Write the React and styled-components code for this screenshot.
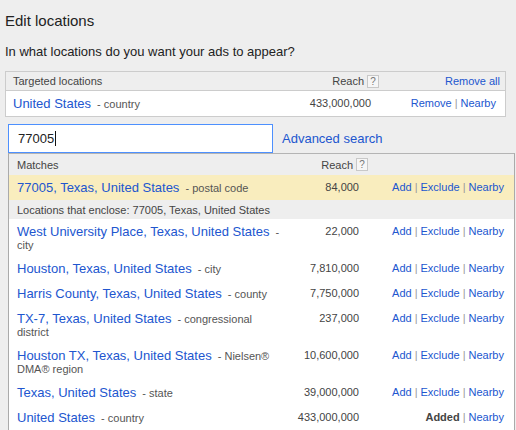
import React from "react";
import styled, { createGlobalStyle } from "styled-components";

const GlobalStyle = createGlobalStyle`
  html, body { margin: 0; padding: 0; }
  body {
    background: #eeeeee;
    font-family: "Liberation Sans", Arial, sans-serif;
    color: #222;
  }
`;

const Page = styled.div`
  padding: 12px 5px 0;
  overflow: hidden;
  height: 418px;
`;

const Title = styled.h1`
  margin: 0;
  font-size: 15px;
  line-height: 18px;
  font-weight: normal;
  color: #222;
`;

const Question = styled.p`
  margin: 14px 0 0;
  font-size: 13px;
  line-height: 16px;
  color: #222;
`;

const TargetBox = styled.div`
  margin-top: 11px;
  border: 1px solid #ccc;
  background: #fff;
  width: 499px;
`;

const TargetHeader = styled.div`
  display: grid;
  grid-template-columns: 1fr 100px 121px;
  align-items: center;
  height: 18px;
  padding: 0 5px 0 7px;
  background: #eeeeee;
  border-bottom: 1px solid #ccc;
  font-size: 11px;
  color: #444;
`;

const TargetRow = styled.div`
  display: grid;
  grid-template-columns: 1fr 100px 125px;
  align-items: center;
  height: 25px;
  padding: 0 9px 0 7px;
`;

const RightCell = styled.div`
  text-align: right;
  display: flex;
  justify-content: flex-end;
  align-items: center;
`;

const HelpBox = styled.span`
  display: inline-flex;
  align-items: center;
  justify-content: center;
  width: 10px;
  height: 11px;
  margin-left: 3px;
  border: 1px solid #c8c8c8;
  background: #f6f6f6;
  color: #777;
  font-size: 10px;
  line-height: 11px;
`;

const Link = styled.a`
  color: #2156cf;
  text-decoration: none;
  cursor: pointer;
  font-size: ${(p) => (p.$big ? "13px" : "11px")};
  line-height: ${(p) => (p.$big ? "15px" : "inherit")};
`;

const Desc = styled.span`
  font-size: 11px;
  color: #555;
  margin-left: 3px;
`;

const Number = styled.div`
  text-align: right;
  font-size: 11px;
  line-height: 15px;
  color: #444;
`;

const Actions = styled.div`
  text-align: right;
  font-size: 11px;
  line-height: 15px;
  color: #999;
  white-space: nowrap;
`;

const Sep = styled.span`
  color: #999;
  margin: 0 3px;
`;

const Added = styled.b`
  color: #444;
`;

const SearchRow = styled.div`
  display: flex;
  align-items: center;
  gap: 9px;
  margin: 7px 0 0 3px;
`;

const SearchInput = styled.div`
  box-sizing: border-box;
  width: 265px;
  height: 29px;
  border: 1px solid #4d90fe;
  background: #fff;
  padding: 0 9px;
  display: flex;
  align-items: center;
  font-size: 13px;
  color: #222;
`;

const Caret = styled.span`
  display: inline-block;
  width: 1px;
  height: 15px;
  background: #111;
  margin-left: 1px;
`;

const Dropdown = styled.div`
  margin-left: 3px;
  width: 505px;
  border: 1px solid #aaa;
  border-top-color: #b4b4b4;
  background: #fff;
`;

const DropHeader = styled.div`
  display: grid;
  grid-template-columns: 265px 86px 1fr;
  align-items: center;
  height: 21px;
  padding: 0 10px 0 8px;
  background: #eeeeee;
  font-size: 11px;
  color: #444;
`;

const MatchRow = styled.div`
  display: grid;
  grid-template-columns: 265px 77px 1fr;
  align-items: start;
  padding: 5px 10px 5px 8px;
  background: ${(p) => (p.$highlight ? "#f9edbe" : "#fff")};
`;

const NameCell = styled.div`
  font-size: 11px;
  line-height: 12px;
`;

const EncloseRow = styled.div`
  display: flex;
  align-items: center;
  height: 19px;
  padding: 0 8px;
  background: #eeeeee;
  font-size: 11px;
  color: #444;
`;

const matches = [
  { name: "West University Place, Texas, United States", type: "city", reach: "22,000" },
  { name: "Houston, Texas, United States", type: "city", reach: "7,810,000" },
  { name: "Harris County, Texas, United States", type: "county", reach: "7,750,000" },
  { name: "TX-7, Texas, United States", type: "congressional district", reach: "237,000" },
  { name: "Houston TX, Texas, United States", type: "Nielsen® DMA® region", reach: "10,600,000" },
  { name: "Texas, United States", type: "state", reach: "39,000,000" },
  { name: "United States", type: "country", reach: "433,000,000", added: true },
];

function MatchActions({ added }) {
  return (
    <Actions>
      {added ? <Added>Added</Added> : <Link>Add</Link>}
      {!added && (
        <>
          <Sep>|</Sep>
          <Link>Exclude</Link>
        </>
      )}
      <Sep>|</Sep>
      <Link>Nearby</Link>
    </Actions>
  );
}

function Match({ name, type, reach, added, highlight }) {
  return (
    <MatchRow $highlight={highlight}>
      <NameCell>
        <Link $big>{name}</Link> <Desc>- {type}</Desc>
      </NameCell>
      <Number>{reach}</Number>
      <MatchActions added={added} />
    </MatchRow>
  );
}

export default function App() {
  return (
    <>
      <GlobalStyle />
      <Page>
        <Title>Edit locations</Title>
        <Question>In what locations do you want your ads to appear?</Question>
        <TargetBox>
          <TargetHeader>
            <span>Targeted locations</span>
            <RightCell>
              Reach<HelpBox>?</HelpBox>
            </RightCell>
            <RightCell>
              <Link>Remove all</Link>
            </RightCell>
          </TargetHeader>
          <TargetRow>
            <NameCell>
              <Link $big>United States</Link> <Desc>- country</Desc>
            </NameCell>
            <Number>433,000,000</Number>
            <Actions>
              <Link>Remove</Link>
              <Sep>|</Sep>
              <Link>Nearby</Link>
            </Actions>
          </TargetRow>
        </TargetBox>
        <SearchRow>
          <SearchInput>
            77005<Caret />
          </SearchInput>
          <Link $big>Advanced search</Link>
        </SearchRow>
        <Dropdown>
          <DropHeader>
            <span>Matches</span>
            <RightCell>
              Reach<HelpBox>?</HelpBox>
            </RightCell>
            <span />
          </DropHeader>
          <Match name="77005, Texas, United States" type="postal code" reach="84,000" highlight />
          <EncloseRow>Locations that enclose: 77005, Texas, United States</EncloseRow>
          {matches.map((m) => (
            <Match key={m.name} {...m} />
          ))}
        </Dropdown>
      </Page>
    </>
  );
}
